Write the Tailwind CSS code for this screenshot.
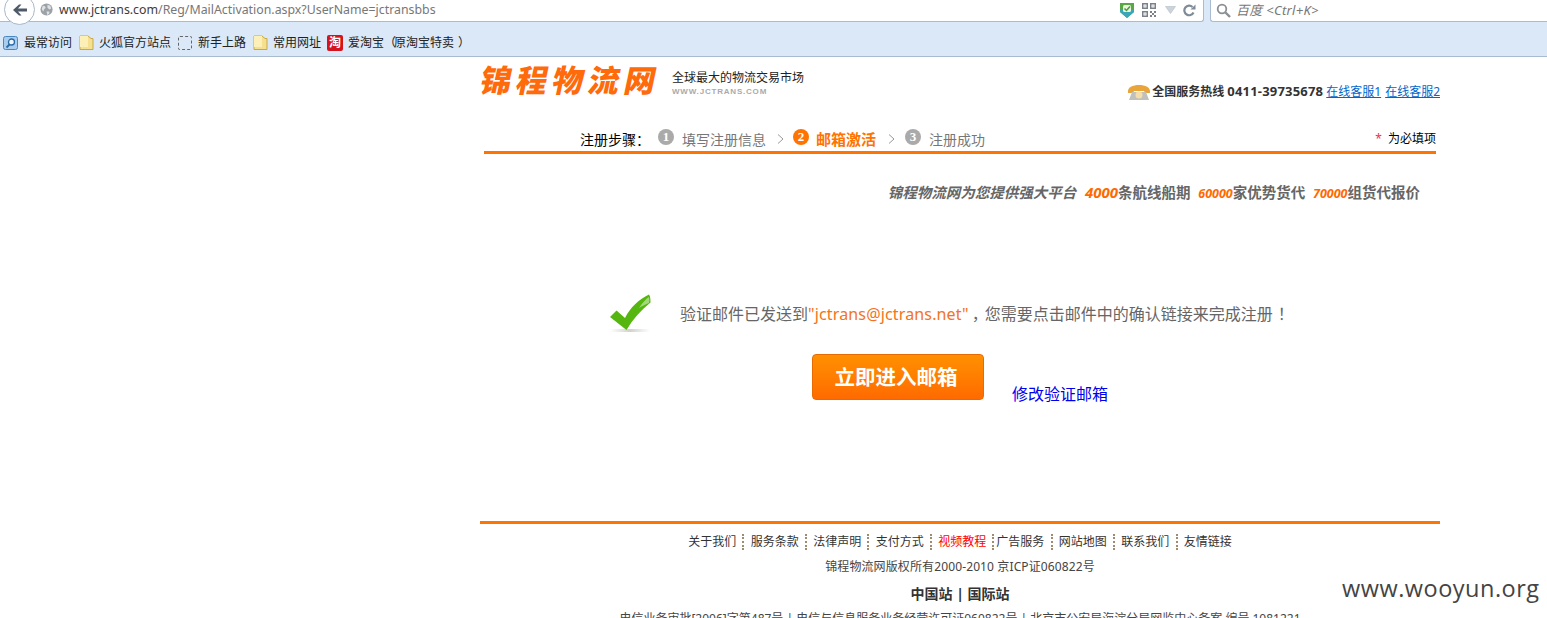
<!DOCTYPE html>
<html lang="zh"><head><meta charset="utf-8"><title>锦程物流网</title>
<script src="https://cdn.jsdelivr.net/npm/@tailwindcss/browser@4"></script></head>
<body class="bg-white overflow-hidden h-[618px] relative font-['Noto_Sans','Noto_Sans_CJK_SC',sans-serif]">
<!-- browser chrome -->
<div class="h-[57px] bg-[#dae8f8] border-b border-[#a9bbd0] flex flex-col">
  <div class="h-[22px] flex relative">
    <div class="absolute left-[4px] top-[-6px] w-[31px] h-[31px] rounded-full bg-white border border-[#a9b8c9] flex items-center justify-center z-10">
      <svg width="16" height="14" viewBox="0 0 16 14"><path d="M1 7 7 1.500h2.500L6 5.500h9v3H6l3.500 4H7z" fill="#4e5a68"/></svg>
    </div>
    <div class="w-[1204px] bg-white border-b border-r border-[#a9bbd0] rounded-br-[3px] flex items-center pl-[40px] h-[22px]">
      <svg width="14" height="14" viewBox="0 0 15 15" class="mr-[5px] mt-[-1px]"><circle cx="7" cy="7" r="6.500" fill="#9ca2a8"/><path d="M3 3c2 0 3 1 3 2s-2 1-2 3-2 0-2-2zM8 2l3 1 1 3-2 1-2-2zM7 9l3 0 0 2-2 2z" fill="#dfe2e5"/></svg>
      <div class="text-[12.35px] leading-[16px] mt-[-1px] text-[#777] whitespace-nowrap"><span class="text-[#3c3c3c]">www.jctrans.com</span>/Reg/MailActivation.aspx?UserName=jctransbbs</div>
      <div class="ml-auto flex items-center mr-[7px] mt-[-1px]">
        <svg width="14" height="16" viewBox="0 0 14 16"><path d="M0 1h14v9l-7 6-7-6z" fill="#5aa845"/><path d="M0 10l7 6 7-6v-2H0z" fill="#3aa6b8"/><rect x="3" y="3" width="8" height="7" rx="1.500" fill="#e8f5df"/><path d="M4.500 6.500 6.500 8.500 10 4.500" stroke="#4c9c3a" stroke-width="1.500" fill="none"/></svg>
        <svg width="14" height="14" viewBox="0 0 14 14" class="ml-[8px]" fill="#7b8188"><path fill-rule="evenodd" d="M0 0h6v6H0zM1.500 1.500v3h3v-3zM8 0h6v6H8zM9.500 1.500v3h3v-3zM0 8h6v6H0zM1.500 9.500v3h3v-3z"/><path d="M2.500 2.500h1v1h-1zM10.500 2.500h1v1h-1zM2.500 10.500h1v1h-1zM8 8h2v2H8zM12 8h2v2h-2zM10 10h2v2h-2zM8 12h2v2H8zM12 12h2v2h-2z"/></svg>
        <svg width="11" height="8" viewBox="0 0 11 8" class="ml-[9px]"><path d="M.5.500h10L5.500 7.500z" fill="#ccd3db" stroke="#b4bcc6" stroke-width=".6"/></svg>
        <svg width="13" height="13" viewBox="0 0 13 13" class="ml-[7px]"><path d="M10.500 8.500A4.800 4.800 0 1 1 9.500 3" stroke="#7f8b97" stroke-width="2.200" fill="none"/><path d="M7.500 5.500h5v-5z" fill="#7f8b97"/></svg>
      </div>
    </div>
    <div class="w-[6px]"></div>
    <div class="flex-1 bg-white border-b border-l border-[#a9bbd0] rounded-bl-[3px] flex items-center pl-[5px]">
      <svg width="15" height="15" viewBox="0 0 15 15" class="mt-[-1px]"><circle cx="6" cy="6" r="4.300" stroke="#8a8f95" stroke-width="1.800" fill="none"/><path d="M9.500 9.500 14 14" stroke="#8a8f95" stroke-width="2.400"/></svg>
      <span class="ml-[5px] mt-[-1px] text-[13px] leading-[16px] italic text-[#777] tracking-[.3px]">百度 &lt;Ctrl+K&gt;</span>
    </div>
  </div>
  <div class="flex-1 flex items-center pl-[3px] text-[12px] text-[#222] pt-[8px]">
    <svg width="16" height="16" viewBox="0 0 16 16"><rect x=".5" y="1.500" width="14" height="13" rx="2" fill="#a9cdee" stroke="#4b87bf"/><circle cx="8.500" cy="7" r="3" fill="#eef6fd" stroke="#2a6aa6" stroke-width="1.300"/><path d="M6.500 9.500 3.500 12.500" stroke="#2a6aa6" stroke-width="1.800"/></svg>
    <span class="ml-[5px]">最常访问</span>
    <svg width="15" height="16" viewBox="0 0 15 16" class="ml-[7px]"><path d="M1 1h8l3 2.500 2 0v11H1z" fill="#f6e08e" stroke="#c7a94d"/><path d="M1 1h8v11H1z" fill="#fcf0b8"/></svg>
    <span class="ml-[5px]">火狐官方站点</span>
    <div class="ml-[7px] w-[14px] h-[14px] border border-dashed border-[#666] rounded-[2px]"></div>
    <span class="ml-[6px]">新手上路</span>
    <svg width="15" height="16" viewBox="0 0 15 16" class="ml-[7px]"><path d="M1 1h8l3 2.500 2 0v11H1z" fill="#f6e08e" stroke="#c7a94d"/><path d="M1 1h8v11H1z" fill="#fcf0b8"/></svg>
    <span class="ml-[5px]">常用网址</span>
    <div class="ml-[6px] w-[16px] h-[16px] rounded-[2px] bg-[#d3141f] text-white text-[12px] leading-[16px] text-center font-bold">淘</div>
    <span class="ml-[5px]">爱淘宝（<span class="ml-[-2px]"></span>原淘宝特卖<span class="ml-[4px]">）</span></span>
  </div>
</div>
<!-- page -->
<div class="ml-[480px] w-[960px]">
  <header class="h-[70px] flex pl-[4px]">
    <div class="pt-[5px] pl-[2px] text-[31px] leading-[36px] font-black text-[#ff6a0a] -skew-x-12 origin-top tracking-[5px] whitespace-nowrap w-[181px]">锦程物流网</div>
    <div class="pt-[13px] ml-[7px]">
      <div class="text-[12px] leading-[16px] text-[#222] whitespace-nowrap">全球最大的物流交易市场</div>
      <div class="mt-[1px] text-[8px] leading-[10px] font-['Liberation_Sans'] font-bold tracking-[.8px] text-[#aaa]">WWW.JCTRANS.COM</div>
    </div>
    <div class="ml-auto flex items-center h-[24px] mt-[23px] text-[12px] whitespace-nowrap">
      <svg width="24" height="17" viewBox="0 0 24 17"><path d="M1 9C0 3 6 1 12 1s12 2 11 8h-5l-1-2H7L6 9z" fill="#e9a53a"/><path d="M5 8h14l3 8H2z" fill="#c0c0bc"/><circle cx="12" cy="11" r="3.500" fill="#f5deaa"/></svg>
      <span class="ml-[1px] font-bold text-[#333]">全国服务热线 <span class="text-[13px] tracking-[.2px]">0411-39735678</span></span>
      <span class="ml-[3px] text-[#0066cc] underline">在线客服1</span>
      <span class="ml-[4px] text-[#0066cc] underline">在线客服2</span>
    </div>
  </header>
  <div class="ml-[4px] w-[952px] h-[27px] border-b-[3px] border-[#ff7300] flex items-center pl-[96px] whitespace-nowrap">
    <span class="text-[14px] text-black">注册步骤：</span>
    <span class="ml-[8px] mt-[-4px] w-[16px] h-[16px] rounded-full bg-[#aaa] text-white text-[13px] leading-[16px] font-bold text-center font-['Liberation_Serif']">1</span>
    <span class="ml-[8px] text-[14px] text-[#777]">填写注册信息</span>
    <svg width="7" height="10" viewBox="0 0 7 10" class="ml-[11px]"><path d="M1 .500 6 5 1 9.500" stroke="#999" fill="none"/></svg>
    <span class="ml-[9px] mt-[-4px] w-[16px] h-[16px] rounded-full bg-[#ff7300] text-white text-[13px] leading-[16px] font-bold text-center font-['Liberation_Serif']">2</span>
    <span class="ml-[7px] text-[15px] font-bold text-[#ff7300]">邮箱激活</span>
    <svg width="7" height="10" viewBox="0 0 7 10" class="ml-[12px]"><path d="M1 .500 6 5 1 9.500" stroke="#999" fill="none"/></svg>
    <span class="ml-[10px] mt-[-4px] w-[16px] h-[16px] rounded-full bg-[#aaa] text-white text-[13px] leading-[16px] font-bold text-center font-['Liberation_Serif']">3</span>
    <span class="ml-[8px] text-[14px] text-[#777]">注册成功</span>
    <span class="ml-auto text-[12px] text-black"><span class="text-[#e8374a] mr-[6px]">*</span>为必填项</span>
  </div>
  <div class="mt-[28px] pr-[20px] text-right text-[14.5px] leading-[20px] font-bold text-[#666] whitespace-nowrap">
    <span class="italic">锦程物流网为您提供强大平台</span>
    <span class="ml-[5px] text-[15px] italic text-[#ff6a00]">4000</span>条航线船期
    <span class="ml-[4px] text-[12.5px] italic text-[#ff6a00]">60000</span>家优势货代
    <span class="ml-[4px] text-[12.5px] italic text-[#ff6a00]">70000</span>组货代报价
  </div>
  <div class="mt-[88px] ml-[129px] flex items-center h-[44px] whitespace-nowrap">
    <svg width="42" height="42" viewBox="0 0 42 42" class="mt-[-2px]"><defs><linearGradient id="s" x1="0" x2="1"><stop offset="0" stop-color="#fff"/><stop offset=".5" stop-color="#d2d2cc"/><stop offset="1" stop-color="#fff"/></linearGradient></defs><rect x="1" y="37" width="40" height="3" fill="url(#s)"/><path d="M1 25 7.500 18.500 16 26C21 16 30 7 40 2.500c1.500 2 1.500 6 1.500 8C32 18 24 27 17.500 38z" fill="#55b610"/><path d="M30 16C33 11 37 7 40 5c.5 2 .5 4 0 6-3 1-7 3-10 5z" fill="#a3d97c"/></svg>
    <span class="ml-[29px] text-[16px] leading-[24px] text-[#666]">验证邮件已发送到<span class="text-[#f47320] tracking-[.15px]">"jctrans@jctrans.net"</span><span class="inline-block ml-[3px] mr-[-3px]">，</span>您需要点击邮件中的确认链接来完成注册<span class="inline-block ml-[5px]">！</span></span>
  </div>
  <div class="mt-[18px] ml-[332px] flex items-start">
    <div class="w-[172px] h-[46px] rounded-[4px] border border-[#e86a00] bg-gradient-to-b from-[#ff9000] to-[#ff6a00] text-white text-[20.5px] leading-[44px] font-bold text-center pr-[4px] whitespace-nowrap">立即进入邮箱</div>
    <span class="ml-[28px] mt-[28px] text-[16px] leading-[24px] text-[#0000ee]">修改验证邮箱</span>
  </div>
  <div class="mt-[115px] h-[3px] bg-[#ff7300]"></div>
  <div class="mt-[7px] flex justify-center items-center text-[12px] leading-[22px] text-[#333] whitespace-nowrap">
    <span>关于我们</span><i class="mx-[6.250px] h-[16px] border-l-2 border-dotted border-[#a08a70]"></i>
    <span>服务条款</span><i class="mx-[6.250px] h-[16px] border-l-2 border-dotted border-[#a08a70]"></i>
    <span>法律声明</span><i class="mx-[6.250px] h-[16px] border-l-2 border-dotted border-[#a08a70]"></i>
    <span>支付方式</span><i class="mx-[6.250px] h-[16px] border-l-2 border-dotted border-[#a08a70]"></i>
    <span class="text-[#ff0000]">视频教程</span><i class="ml-[6px] mr-[2px] h-[16px] border-l-2 border-dotted border-[#a08a70]"></i>
    <span>广告服务</span><i class="mx-[6.250px] h-[16px] border-l-2 border-dotted border-[#a08a70]"></i>
    <span>网站地图</span><i class="mx-[6.250px] h-[16px] border-l-2 border-dotted border-[#a08a70]"></i>
    <span>联系我们</span><i class="mx-[6.250px] h-[16px] border-l-2 border-dotted border-[#a08a70]"></i>
    <span>友情链接</span>
  </div>
  <div class="mt-[3px] text-center text-[12px] leading-[22px] text-[#444] whitespace-nowrap tracking-[.12px]">锦程物流网版权所有2000-2010 京ICP证060822号</div>
  <div class="mt-[5px] text-center text-[14px] leading-[22px] font-bold text-[#333] whitespace-nowrap">中国站 | 国际站</div>
  <div class="mt-[3px] text-center text-[12px] leading-[22px] text-[#444] whitespace-nowrap">电信业务审批[2006]字第487号 | 电信与信息服务业务经营许可证060822号 | 北京市公安局海淀分局网监中心备案 编号 1081221</div>
</div>
<div class="absolute left-[1342px] top-[572px] text-[23.500px] leading-[32px] tracking-[.5px] text-[#444] font-['Open_Sans'] whitespace-nowrap">www.wooyun.org</div>
</body></html>
